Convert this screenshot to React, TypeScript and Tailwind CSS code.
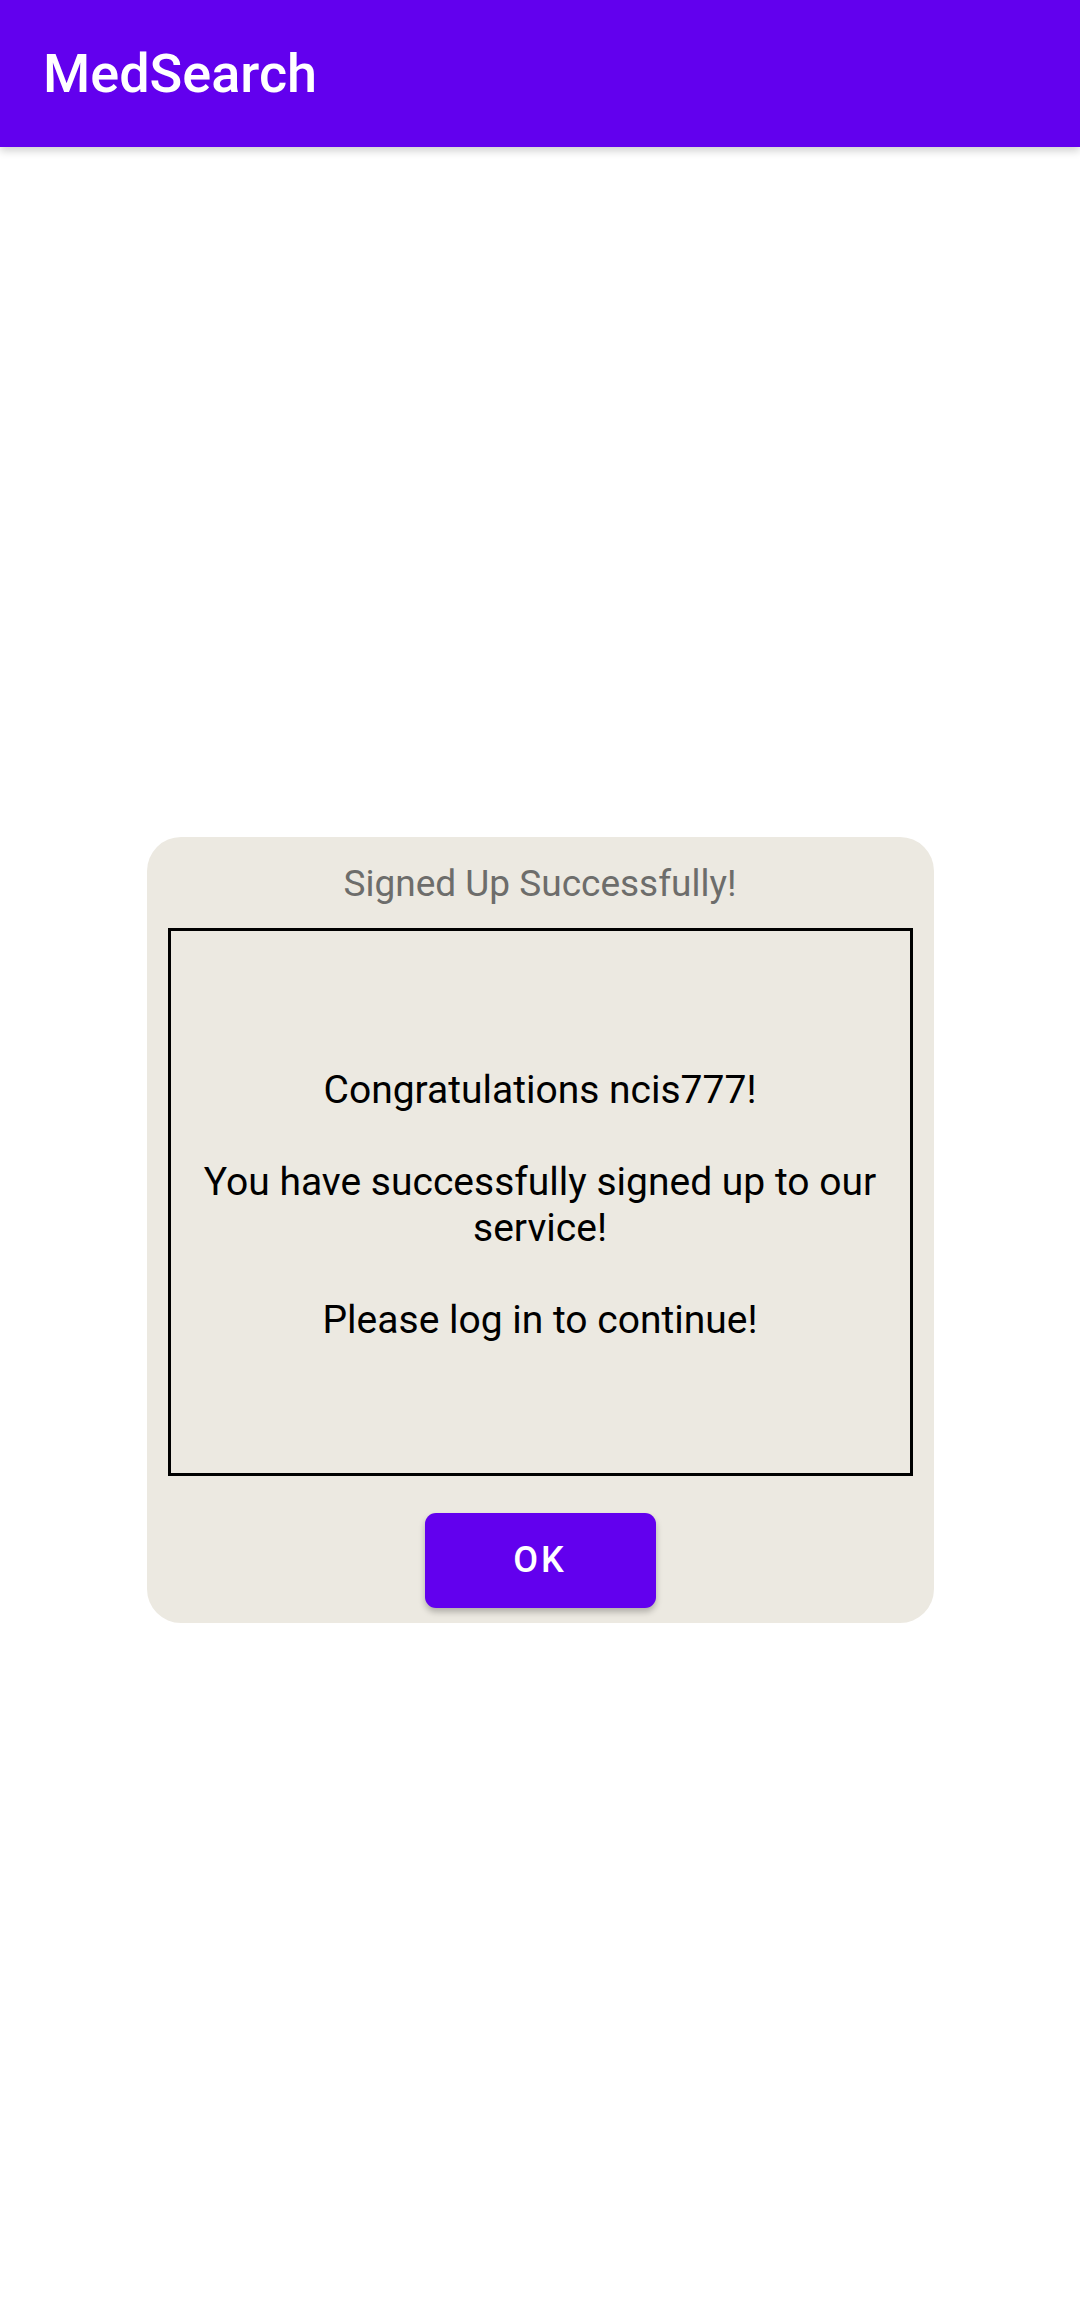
export default function App() {
  return (
    <div className="flex h-[2312px] w-[1080px] flex-col bg-white font-['Roboto',sans-serif]">
      <header className="relative z-10 flex h-[147px] shrink-0 items-center bg-[#6200ee] pl-[43px] shadow-[0_4px_8px_rgba(0,0,0,0.18)]">
        <h1 className="text-[54px] leading-none font-medium text-white">MedSearch</h1>
      </header>

      <main className="flex flex-1 items-center justify-center">
        <div className="flex w-[787px] flex-col items-center rounded-[34px] bg-[#ece9e1] px-[21px] pb-[15px]">
          <p className="mb-[24px] pt-[26px] text-[37px] leading-[41px] text-[#6d6d6b]">
            Signed Up Successfully!
          </p>

          <div className="flex h-[548px] w-full items-center justify-center border-[3px] border-black px-[20px] pt-[6px]">
            <p className="text-center text-[39px] leading-[46px] text-black">
              Congratulations ncis777!
              <br />
              <br />
              You have successfully signed up to our service!
              <br />
              <br />
              Please log in to continue!
            </p>
          </div>

          <button className="mt-[37px] flex h-[95px] w-[231px] items-center justify-center rounded-[11px] bg-[#6200ee] text-[36px] font-medium tracking-[3px] text-white shadow-[0_4px_6px_rgba(0,0,0,0.25)]">
            OK
          </button>
        </div>
      </main>
    </div>
  );
}
